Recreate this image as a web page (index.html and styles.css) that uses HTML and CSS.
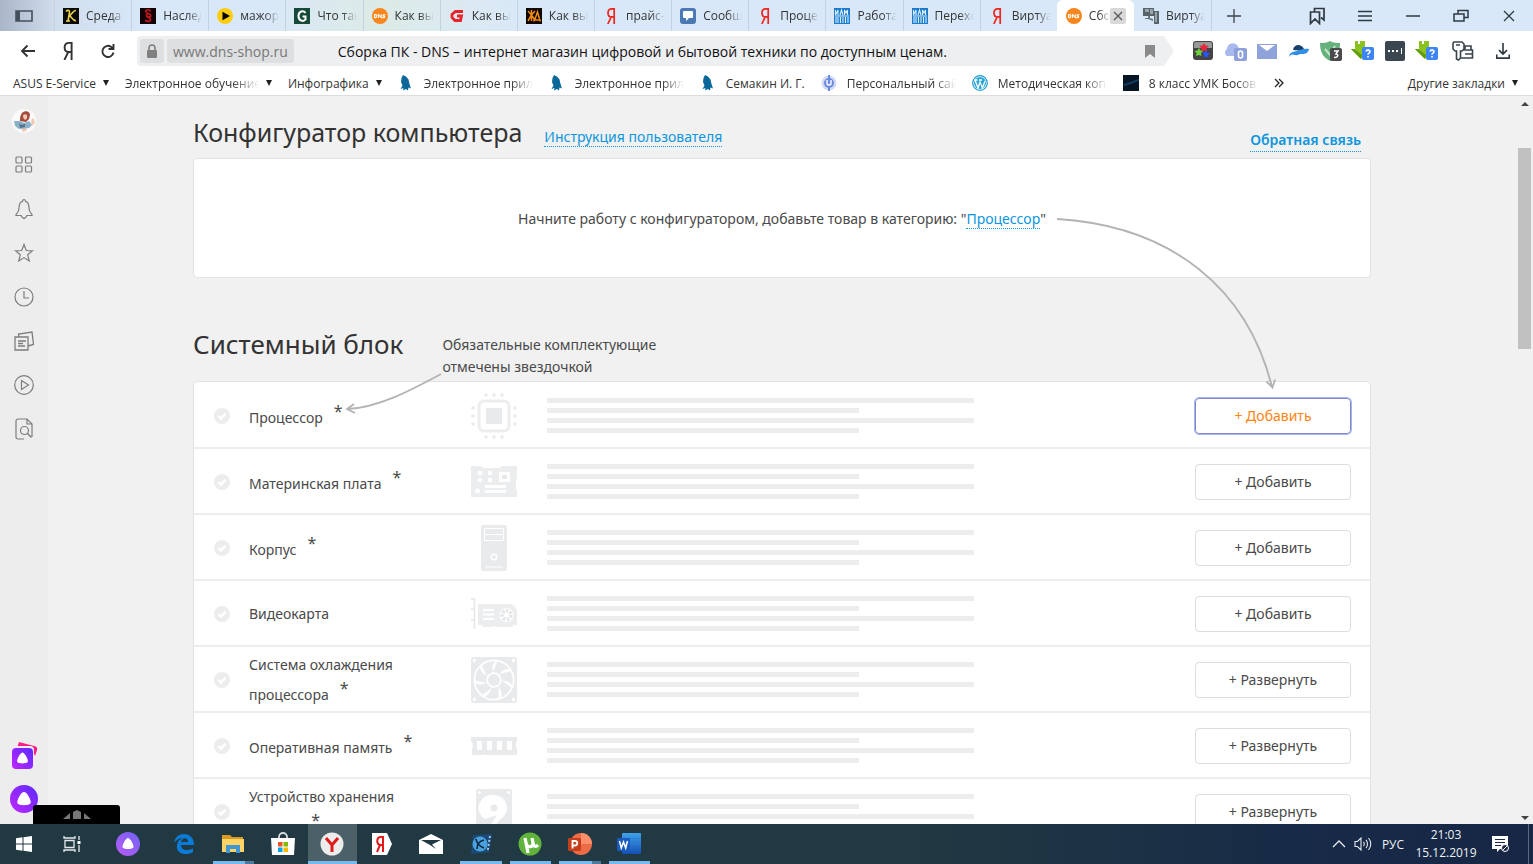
FILE: index.html
```html
<!DOCTYPE html>
<html lang="ru">
<head>
<meta charset="utf-8">
<title>Сборка ПК - DNS</title>
<link rel="stylesheet" href="styles.css">
</head>
<body>
<svg class="defs" aria-hidden="true">
  <defs>
    <linearGradient id="violet" x1="1" y1="0" x2="0" y2="1"><stop offset="0" stop-color="#5a2bff"/><stop offset="1" stop-color="#c026ff"/></linearGradient>
    <linearGradient id="soft" x1="1" y1="0" x2="0" y2="1"><stop offset="0" stop-color="#6f62f5"/><stop offset="1" stop-color="#b95cf5"/></linearGradient>
    <linearGradient id="wp" x1="0" y1="0" x2="0" y2="1"><stop offset="0" stop-color="#3fa2ea"/><stop offset="1" stop-color="#1450b4"/></linearGradient>
    <symbol id="ya" viewBox="0 0 16 16"><path d="M11.200 0V16M11.200 .8H9C6.200 .8 5 2.600 5 4.900 5 7.400 6.400 8.900 8.600 8.900H11M8.200 8.900 4.800 16" fill="none" stroke="currentColor" stroke-width="1.700"/></symbol>
    <symbol id="dns" viewBox="0 0 16 16"><circle cx="8" cy="8" r="8" fill="#f7861c"/><path d="M2.600 6.600v3h1c1.400 0 1.600-3 0-3zM6.400 10V6.700L9.200 9.500V6.300M13.500 6.700h-1.700c-1.200 0-1 1.400 0 1.400s1.400 1.500 0 1.500h-1.600" fill="none" stroke="#fff" stroke-width="1.100"/></symbol>
    <symbol id="iai" viewBox="0 0 16 16"><path fill="#1a7acb" d="M0 0h16v16H0z"/><path d="M1.500 2v5L4 2v5M6 7l1.500-5L9 7M10.500 7V2l1.500 3 1.500-3v5M2 9v6M4 9v6M6.500 9v6M9 9v6M11.500 9v6M14 9v6M1 8h14" fill="none" stroke="#d9efff" stroke-width="1.100"/></symbol>
    <symbol id="bird" viewBox="0 0 16 16"><path fill="#0b6799" d="M5 0l3 1.500 2.500 3 1 4.500 1.500 4.500-2.500-1-.5 3-2-1.500-3 1.500.5-2.500-3 1 2-3.500-1.500-3.500.500-4z"/></symbol>
    <symbol id="check" viewBox="0 0 16 16"><circle cx="8" cy="8" r="8" fill="#ededed"/><path d="M4.500 8.200 7 10.500 11.500 5.800" fill="none" stroke="#fff" stroke-width="2.400"/></symbol>
    <symbol id="savefrom" viewBox="0 0 24 20"><path fill="#8cc21f" d="M4 0h3v3h2V0h5v7h5L10 18 0 8h4z"/><path fill="#5f9c12" d="M10 18 0 8h3l8 6z"/><rect x="11" y="6" width="12" height="13" rx="2" fill="#3d85f4"/><path d="M15 10.500c.3-2 4.200-1.800 4 .3-.1 1.200-2 1.200-2 3M17 15v1.600" fill="none" stroke="#fff" stroke-width="1.600"/></symbol>
  </defs>
</svg>

<header class="browser">
  <div class="tabbar">
    <button class="panel-btn" aria-label="Панель"><svg class="i18" viewBox="0 0 18 12"><path d="M1 1h16v10H1z" fill="none" stroke="#44505c" stroke-width="1.600"/><path d="M1 1h4v10H1z" fill="#44505c"/></svg></button>
    <nav class="tabs" aria-label="Вкладки">
      <button class="tab"><svg class="i16" viewBox="0 0 16 16"><path fill="#0a0a06" d="M0 0h16v16H0z"/><path d="M3 3.500c2-2 4-1 3.500 1L5 13M3 13h4M13 2.500C10 2 9 7 5.500 8 9 7 9 13.500 13 12.500" fill="none" stroke="#ecd34b" stroke-width="1.600"/></svg><span>Среда</span></button>
      <button class="tab"><svg class="i16" viewBox="0 0 16 16"><path fill="#120406" d="M0 0h16v16H0z"/><path d="M11 3C6 0 4 4 8 5.500s4 4-1 3M10.500 6C6 5 5 8 8.500 9.500S11 15 5 12.500" fill="none" stroke="#c4161c" stroke-width="1.600"/></svg><span>Наслед</span></button>
      <button class="tab"><svg class="i16" viewBox="0 0 16 16"><circle cx="8" cy="8" r="8" fill="#ffcc10"/><path d="M5.500 3.800 13 8l-7.500 4.200z"/></svg><span>мажор</span></button>
      <button class="tab"><svg class="i16" viewBox="0 0 16 16"><path fill="#154a38" d="M0 0h16v16H0z"/><path d="M11.500 5C9.500 2 4.500 3 4.500 8s5 6 7 3.500V8.500H8.500" fill="none" stroke="#fff" stroke-width="2"/></svg><span>Что так</span></button>
      <button class="tab"><svg class="i16"><use href="#dns"/></svg><span>Как выб</span></button>
      <button class="tab"><svg class="i16" viewBox="0 0 16 16"><path d="M14 3.500H6.500L3 6.500v3l3 3h5.500l1-4.500H8" fill="none" stroke="#e8232a" stroke-width="2.800"/></svg><span>Как выб</span></button>
      <button class="tab"><svg class="i16" viewBox="0 0 16 16"><path fill="#0a0500" d="M0 0h16v16H0z"/><path d="M2 3l3.500 4L2 13M9 3 5.500 7 9 12M5.500 2v11M8 13.500V12h6v1.500M9 11l2.500-7L13.500 11" fill="none" stroke="#f08a12" stroke-width="1.500"/></svg><span>Как выб</span></button>
      <button class="tab"><svg class="i16 red"><use href="#ya"/></svg><span>прайс-л</span></button>
      <button class="tab"><svg class="i16" viewBox="0 0 16 16"><rect width="16" height="16" rx="3" fill="#4c78b4"/><path fill="#fff" d="M4 3h8a1 1 0 0 1 1 1v5a1 1 0 0 1-1 1H9l-3 3v-3H4a1 1 0 0 1-1-1V4a1 1 0 0 1 1-1z"/></svg><span>Сообщ</span></button>
      <button class="tab"><svg class="i16 red"><use href="#ya"/></svg><span>Процес</span></button>
      <button class="tab"><svg class="i16"><use href="#iai"/></svg><span>Работа</span></button>
      <button class="tab"><svg class="i16"><use href="#iai"/></svg><span>Перехо</span></button>
      <button class="tab"><svg class="i16 red"><use href="#ya"/></svg><span>Виртуа</span></button>
      <button class="tab tab-active"><svg class="i16"><use href="#dns"/></svg><span>Сбор</span><i class="tab-close"><svg class="i10" viewBox="0 0 10 10"><path d="M1 1l8 8M9 1 1 9" stroke="#555" stroke-width="1.200"/></svg></i></button>
      <button class="tab"><svg class="i16" viewBox="0 0 16 16"><path fill="#58646b" d="M0 0h11v8H0zM11 3h5v13h-5z"/><path fill="#9aa5aa" d="M2 1h4v3H2zM7 1h3v5H7zM12 4h2v10h-2z"/><path fill="#6d787e" d="M5 8h2v2l3 1v2L5 11H2v-1h3z"/></svg><span>Виртуа</span></button>
    </nav>
    <button class="new-tab" aria-label="Новая вкладка"><svg class="i16" viewBox="0 0 16 16"><path d="M8 1v14M1 8h14" stroke="#3a434b" stroke-width="1.300"/></svg></button>
    <div class="window-btns">
      <button aria-label="Закладки"><svg class="i18" viewBox="0 0 18 18"><path d="M6.500 4.500V1.500H16V13l-3-2.500M2.500 5h9v11.500L7 12l-4.500 4.500z" fill="none" stroke="#2e3940" stroke-width="1.700"/></svg></button>
      <button aria-label="Меню"><svg class="i16" viewBox="0 0 16 16"><path d="M1 3.500h14M1 8h14M1 12.500h14" stroke="#2e3940" stroke-width="1.500"/></svg></button>
      <button aria-label="Свернуть"><svg class="i16" viewBox="0 0 16 16"><path d="M1 8h14" stroke="#2e3940" stroke-width="1.500"/></svg></button>
      <button aria-label="Восстановить"><svg class="i16" viewBox="0 0 16 16"><path d="M1 6h10v7H1zM5 6V2.500h10v7h-4" fill="none" stroke="#2e3940" stroke-width="1.500"/></svg></button>
      <button aria-label="Закрыть"><svg class="i12" viewBox="0 0 12 12"><path d="M1 1l10 10M11 1 1 11" stroke="#2e3940" stroke-width="1.300"/></svg></button>
    </div>
  </div>

  <div class="toolbar">
    <div class="nav-btns">
      <button aria-label="Назад"><svg class="i16" viewBox="0 0 16 16"><path d="M15 8H2M7.500 2.500 2 8l5.500 5.500" fill="none" stroke="#333" stroke-width="1.900"/></svg></button>
      <button aria-label="Яндекс"><svg class="i18"><use href="#ya"/></svg></button>
      <button aria-label="Обновить"><svg class="i16" viewBox="0 0 16 16"><path d="M13.500 9.500A5.600 5.600 0 1 1 11 3.700L13 5.500M13.500 1v5h-5" fill="none" stroke="#333" stroke-width="1.900"/></svg></button>
    </div>
    <div class="omnibox">
      <button class="lock" aria-label="Защита"><svg class="i16" viewBox="0 0 16 16"><rect x="3" y="7" width="10" height="8" rx="1" fill="#808080"/><path d="M5 7V5a3 3 0 0 1 6 0v2" fill="none" stroke="#808080" stroke-width="1.600"/></svg></button>
      <button class="host">www.dns-shop.ru</button>
      <input class="page-title" type="text" aria-label="Адресная строка" value="Сборка ПК - DNS – интернет магазин цифровой и бытовой техники по доступным ценам.">
      <button class="mark" aria-label="В закладки"><svg class="i14" viewBox="0 0 14 14"><path fill="#8a8a8a" d="M2 1h10v13L7 10l-5 4z"/></svg></button>
    </div>
    <div class="extensions">
      <button aria-label="Звёзды"><svg class="i20" viewBox="0 0 20 20"><rect width="20" height="19" rx="3" fill="#444"/><path d="M1 3a2 2 0 0 1 2-2h14a2 2 0 0 1 2 2v4H1z" fill="#999"/><path fill="#e8283c" d="M11 2l1.500 2.500 3 .5-2 2.500.5 3-3-1-3 1 .5-3-2-2.500 3-.500z"/><path fill="#6bd13c" d="M6 7l1.500 2.500 2.500.5-2 2 .5 3-2.500-1-3 1 .5-3-2-2 3-.500z"/><path fill="#2c55ff" d="M13 9l1 2.500 3 .5-2 2 .5 2.500-2.500-1-2.500 1 .5-3-2-2 3-.500z"/></svg></button>
      <button aria-label="Облако"><svg class="i24" viewBox="0 0 24 20"><path fill="#a9b9ee" d="M4 15a4 4 0 0 1 0-7 6 6 0 0 1 11-3l3 10z"/><rect x="11" y="7" width="13" height="13" rx="2" fill="#8da0db"/><rect x="15.500" y="10" width="4" height="7" rx="2" fill="none" stroke="#fff" stroke-width="1.600"/></svg></button>
      <button aria-label="Почта"><svg class="i20" viewBox="0 0 20 16"><path fill="#8fa3da" d="M0 1h20v15H0z"/><path fill="#fff" d="M2 2h16l-8 6z"/></svg></button>
      <button aria-label="Птица"><svg class="i20" viewBox="0 0 20 16"><path fill="#193f6b" d="M4 7c1-6 8-7 11-1v2z"/><path fill="#2f8fe6" d="M0 14C1 8 5 9 8 8c4-1 6-3 12-2-1 5-5 5-8 5s-3 2-6 1-4-1-6 2z"/></svg></button>
      <button aria-label="Защита от рекламы"><svg class="i24" viewBox="0 0 24 20"><path fill="#66b17c" d="M1 2c4 0 6 0 10-2 4 2 6 2 10 2 0 8-2 14-10 18C3 16 1 9 1 2z"/><path d="M6 8l5 6 5-9" fill="none" stroke="#c4e4cd" stroke-width="2"/><rect x="11" y="7" width="12" height="13" rx="2" fill="#4a4a4c"/><path d="M15 10h4l-2 3c3 0 2 4-2 3.500" fill="none" stroke="#fff" stroke-width="1.500"/></svg></button>
      <button aria-label="Загрузчик"><svg class="i24"><use href="#savefrom"/></svg></button>
      <button aria-label="Пароли"><svg class="i20" viewBox="0 0 20 20"><rect width="20" height="20" rx="2" fill="#3a4650"/><path d="M3 10h2M7 10h2M11 10h2" stroke="#fff" stroke-width="2.200"/><path d="M16.500 7v6" stroke="#fff"/></svg></button>
      <button aria-label="Загрузчик 2"><svg class="i24"><use href="#savefrom"/></svg></button>
      <button aria-label="Ключи"><svg class="i22" viewBox="0 0 22 20"><path d="M2 1h8l2 2v5l-2 2H8.500v7L6.500 19l-2-1v-8H3L1 8V2zM13 8V5h6v4M11 9h9.500v8H9M13 13h7M4 4h4" fill="none" stroke="#38444c" stroke-width="1.600"/></svg></button>
      <button aria-label="Загрузки"><svg class="i16" viewBox="0 0 16 18"><path d="M8 0v12M3.500 8 8 12.500 12.500 8M1 13v4h14v-4" fill="none" stroke="#2e3940" stroke-width="1.800"/></svg></button>
    </div>
  </div>

  <nav class="bookmarks" aria-label="Закладки">
    <a class="folder" href="#"><span>ASUS E-Service</span><i class="caret"></i></a>
    <a class="folder" href="#"><span class="fade folder-text">Электронное обучение</span><i class="caret"></i></a>
    <a class="folder" href="#"><span>Инфографика</span><i class="caret"></i></a>
    <a class="bookmark" href="#"><svg class="i16"><use href="#bird"/></svg><span class="fade">Электронное приложение</span></a>
    <a class="bookmark" href="#"><svg class="i16"><use href="#bird"/></svg><span class="fade">Электронное приложение</span></a>
    <a class="bookmark" href="#"><svg class="i16"><use href="#bird"/></svg><span>Семакин И. Г.</span></a>
    <a class="bookmark" href="#"><svg class="i16" viewBox="0 0 16 16"><circle cx="8" cy="8" r="7.500" fill="#d3dbf2"/><circle cx="8" cy="8" r="5" fill="#6c8be0"/><path d="M8 0v16" stroke="#6c8be0" stroke-width="2"/><path d="M6 5v3.500c0 2 4 2 4 0V5" fill="none" stroke="#fff" stroke-width="1.400"/></svg><span class="fade">Персональный сайт</span></a>
    <a class="bookmark" href="#"><svg class="i16" viewBox="0 0 16 16"><circle cx="8" cy="8" r="7.300" fill="#fff" stroke="#1b9bd0" stroke-width="1.200"/><circle cx="8" cy="8" r="6" fill="#2aa5d8"/><path d="M3 5l3 8 2-6 2.500 6 2.500-7M2.500 5h3M7 5h3" fill="none" stroke="#fff" stroke-width="1.300"/></svg><span class="fade">Методическая копилка</span></a>
    <a class="bookmark" href="#"><svg class="i16" viewBox="0 0 16 16"><path fill="#071426" d="M0 0h16v16H0z"/><path d="M1 10C7 9 11 6 16 5" stroke="#123a60" stroke-width="2" fill="none"/></svg><span class="fade">8 класс УМК Босова</span></a>
    <button class="more" aria-label="Ещё"><svg class="i10" viewBox="0 0 10 10"><path d="M1 1l4 4-4 4M5 1l4 4-4 4" fill="none" stroke="#222" stroke-width="1.300"/></svg></button>
    <a class="folder other" href="#"><span>Другие закладки</span><i class="caret"></i></a>
  </nav>
</header>

<div class="viewport">
  <aside class="sidebar">
    <button aria-label="Профиль"><svg class="i24" viewBox="0 0 24 24"><circle cx="12" cy="12" r="12" fill="#fafafa"/><path fill="#a44b3c" d="M10 4c3-3 8-2 8 2l-1 4-3 3-6-1c0-3 0-5 2-8z"/><path fill="#f2c9b4" d="M11 6c3-2 5 0 4 3s-4 2-4-3zM19 13l1-4 2 1 1 4-3 3zM9 19l7-2-2 5-3 1z"/><path fill="#8bb2ca" d="M2 12l6 0 4 2 5-2 3 4-3 3-10 1-4-3z"/><path fill="#55748b" d="M7 14l2 2 4-1v3l-5 1z"/></svg></button>
    <button aria-label="Табло"><svg class="i20" viewBox="0 0 20 20"><g fill="none" stroke="#7d7d7d" stroke-width="1.200"><rect x="2" y="2" width="6" height="6" rx="1"/><rect x="11.500" y="2" width="6" height="6" rx="1"/><rect x="2" y="11" width="6" height="6" rx="1"/><rect x="11.500" y="11" width="6" height="6" rx="1"/></g></svg></button>
    <button aria-label="Уведомления"><svg class="i22" viewBox="0 0 22 22"><path d="M11 1.500c1 0 1.300 1 1.300 1.600C15.500 4 16 7 16 10c0 4 1 4.500 3 6.500v1H14c-.5 1.500-1.500 2-3 3-1.500-1-2.500-1.500-3-3H3v-1c2-2 3-2.500 3-6.500 0-3 .5-6 3.700-6.900 0-.6.300-1.600 1.300-1.600z" fill="none" stroke="#7d7d7d" stroke-width="1.200"/></svg></button>
    <button aria-label="Избранное"><svg class="i20" viewBox="0 0 20 20"><path d="M10 1.500l2.300 6 6.200.3-4.800 4 1.600 6.200L10 14.600 4.700 18l1.600-6.200-4.800-4 6.200-.3z" fill="none" stroke="#7d7d7d" stroke-width="1.200"/></svg></button>
    <button aria-label="История"><svg class="i20" viewBox="0 0 20 20"><circle cx="10" cy="10" r="9" fill="none" stroke="#7d7d7d" stroke-width="1.200"/><path d="M10 4v7h5" fill="none" stroke="#7d7d7d" stroke-width="1.200"/></svg></button>
    <button aria-label="Коллекции"><svg class="i20" viewBox="0 0 20 20"><path d="M1 6h13v13H1zM5 6l-.5-3L18 1l1.500 12.500L14 15M4 10h8M4 12.500h5M4 15h7" fill="none" stroke="#7d7d7d" stroke-width="1.300"/></svg></button>
    <button aria-label="Видео"><svg class="i20" viewBox="0 0 20 20"><circle cx="10" cy="10" r="9.300" fill="none" stroke="#7d7d7d" stroke-width="1.200"/><path d="M7.500 5.500l7 4.500-7 4.500z" fill="none" stroke="#7d7d7d" stroke-width="1.200"/></svg></button>
    <button aria-label="Поиск"><svg class="i22" viewBox="0 0 22 22"><path d="M11 21H5a2 2 0 0 1-2-2V3a2 2 0 0 1 2-2h9l5 5v13M14 1v5h5" fill="none" stroke="#7d7d7d" stroke-width="1.200"/><circle cx="11.500" cy="12.500" r="4" fill="none" stroke="#7d7d7d" stroke-width="1.200"/><path d="M14.500 15.500l4 4" stroke="#7d7d7d" stroke-width="1.500"/></svg></button>
    <button class="alice-cards" aria-label="Коллекции Алисы"><svg class="i28" viewBox="0 0 28 28"><path d="M9 1l15 4a3 3 0 0 1 3 4l-2 6-4-8H7z" fill="#ff1e86"/><rect x="1" y="5" width="23" height="23" rx="4" fill="#f4e9ff"/><rect x="2" y="7" width="21" height="21" rx="4" fill="url(#violet)"/><path fill="#fff" d="M12.500 11.500c2 0 6 7 5.300 9.300-.8 2.200-9.800 2.200-10.600 0-.7-2.300 3.300-9.300 5.300-9.300z"/></svg></button>
    <button aria-label="Алиса"><svg class="i28" viewBox="0 0 28 28"><circle cx="14" cy="14" r="14" fill="url(#violet)"/><path fill="#fff" d="M14 7c3 0 7.500 8.500 6.700 11-1 3-12.400 3-13.400 0C6.500 15.500 11 7 14 7z"/></svg></button>
  </aside>

  <main class="page">
    <div class="container">
      <div class="page-head">
        <h1>Конфигуратор компьютера</h1>
        <a class="dotted" href="#">Инструкция пользователя</a>
        <a class="dotted feedback" href="#">Обратная связь</a>
      </div>
      <section class="card intro">
        <p>Начните работу с конфигуратором, добавьте товар в категорию: "<a class="dotted" href="#">Процессор</a>"</p>
        <svg class="arrow-long" viewBox="0 0 226 176" aria-hidden="true"><path d="M4 4C120 11 195 75 219 172M213.500 166.500l6 6 2.500-8" fill="none" stroke="#b3b3b3" stroke-width="1.800"/></svg>
      </section>
      <div class="section-head">
        <h2>Системный блок</h2>
        <p class="hint">Обязательные комплектующие<br>отмечены звездочкой
          <svg class="arrow-short" viewBox="0 0 100 42" aria-hidden="true"><path d="M99 2C69 18 36 36 5 37M12 32l-7 5 8 4" fill="none" stroke="#b3b3b3" stroke-width="1.800"/></svg>
        </p>
      </div>
      <section class="card parts">
        <div class="row"><svg class="i16"><use href="#check"/></svg><div class="name name-required">Процессор<sup>*</sup></div>
          <svg class="pic" viewBox="0 0 46 46"><rect x="8" y="8" width="30" height="30" rx="5" fill="none" stroke="#ebedef" stroke-width="3"/><path fill="#e8eaec" d="M15 15h16v16H15z"/><path d="M13.500 2h19M13.500 44h19M2 13.500v19M44 13.500v19" stroke="#e8eaec" stroke-width="3" stroke-dasharray="3 5" fill="none"/></svg>
          <div class="lines"><i></i><i></i><i></i><i></i></div><button class="add add-focus">+ Добавить</button></div>
        <div class="row"><svg class="i16"><use href="#check"/></svg><div class="name name-required">Материнская плата<sup>*</sup></div>
          <svg class="pic" viewBox="0 0 46 46"><path fill="#ebedef" d="M0 7h10l2 2h17l2-2h15v12l-1 2v9l1 2v6H0z"/><g fill="#fff"><path d="M7 12h4v4H7zM7 19h4v4H7zM17 12h4v4h-4zM17 19h4v4h-4zM28 13h11v10H28zM14 26h21v3H14zM14 31h21v3H14z"/><circle cx="6.500" cy="32" r="2.500"/></g><path fill="#e6e8ea" d="M31 16h5v4h-5z"/></svg>
          <div class="lines"><i></i><i></i><i></i><i></i></div><button class="add">+ Добавить</button></div>
        <div class="row"><svg class="i16"><use href="#check"/></svg><div class="name name-required">Корпус<sup>*</sup></div>
          <svg class="pic" viewBox="0 0 46 46"><rect x="10" y="0" width="26" height="46" rx="2" fill="#e8eaec"/><path fill="none" stroke="#fff" d="M13.500 3.500h19v12h-19zM14 9.500h18M14 42h18"/><circle cx="23" cy="32" r="2.700" fill="none" stroke="#fff" stroke-width="1.500"/></svg>
          <div class="lines"><i></i><i></i><i></i><i></i></div><button class="add">+ Добавить</button></div>
        <div class="row"><svg class="i16"><use href="#check"/></svg><div class="name">Видеокарта</div>
          <svg class="pic" viewBox="0 0 46 46"><path d="M0 8h3.500v30M0 18h3M0 29h3" stroke="#e6e8ea" stroke-width="1.600" fill="none"/><path fill="#ebedef" d="M7 13h31c4 0 8 4 8 8v13h-4v2H25l-2-1-2 1H11v-2H7z"/><path d="M12 19h11M12 23.500h11M12 28h11" stroke="#fff" stroke-width="1.800"/><circle cx="35.500" cy="24" r="7" fill="#fff"/><circle cx="35.500" cy="24" r="4.300" fill="none" stroke="#e3e5e7" stroke-width="3.500" stroke-dasharray="2.500 1.300"/></svg>
          <div class="lines"><i></i><i></i><i></i><i></i></div><button class="add">+ Добавить</button></div>
        <div class="row"><svg class="i16"><use href="#check"/></svg><div class="name">Система охлаждения<br>процессора<sup>*</sup></div>
          <svg class="pic" viewBox="0 0 46 46"><rect width="46" height="46" rx="3" fill="#e8eaec"/><g fill="#fff"><circle cx="3.500" cy="3.500" r="1.700"/><circle cx="42.500" cy="3.500" r="1.700"/><circle cx="3.500" cy="42.500" r="1.700"/><circle cx="42.500" cy="42.500" r="1.700"/><circle cx="23" cy="23" r="20.500"/></g><g fill="#e8eaec"><path id="blade" d="M16 19 11 9c4-4 9-5 13-5-3 4-3 8-2 11z"/><use href="#blade" transform="rotate(51 23 23)"/><use href="#blade" transform="rotate(103 23 23)"/><use href="#blade" transform="rotate(154 23 23)"/><use href="#blade" transform="rotate(206 23 23)"/><use href="#blade" transform="rotate(257 23 23)"/><use href="#blade" transform="rotate(309 23 23)"/></g><circle cx="23" cy="23" r="7.500" fill="#fff"/><circle cx="23" cy="23" r="6" fill="#e8eaec"/></svg>
          <div class="lines"><i></i><i></i><i></i><i></i></div><button class="add">+ Развернуть</button></div>
        <div class="row"><svg class="i16"><use href="#check"/></svg><div class="name name-required">Оперативная память<sup>*</sup></div>
          <svg class="pic" viewBox="0 0 46 46"><path fill="#e8eaec" d="M0 14h46v4l-1 1v5l1 2v6H15l-1-1-2 1H1v-6l1-2-1-5-1-1z"/><path fill="#fff" d="M6 18h5v9H6zM16 18h5v9h-5zM26 18h5v9h-5zM36 18h5v9h-5z"/></svg>
          <div class="lines"><i></i><i></i><i></i><i></i></div><button class="add">+ Развернуть</button></div>
        <div class="row"><svg class="i16"><use href="#check"/></svg><div class="name">Устройство хранения<br>данных<sup>*</sup></div>
          <svg class="pic" viewBox="0 0 46 46"><rect x="5" width="36" height="46" rx="2" fill="#e8eaec"/><g fill="#fff"><circle cx="8.500" cy="3.500" r="1.500"/><circle cx="37.500" cy="3.500" r="1.500"/><path d="M23 6a13 13 0 0 1 6 24.500L20 41l-3-1 9-14-12 4A13 13 0 0 1 23 6z"/></g><circle cx="23" cy="19" r="3.500" fill="#e8eaec"/></svg>
          <div class="lines"><i></i><i></i><i></i><i></i></div><button class="add">+ Развернуть</button></div>
      </section>
    </div>
  </main>
  <div class="scrollbar" aria-hidden="true"><i class="up"></i><i class="thumb"></i><i class="down"></i></div>
  <div class="black-tab"><svg class="i28" viewBox="0 0 28 10"><path fill="#777" d="M0 9l7-6v6zM28 9l-7-6v6z"/><path fill="#777" d="M10 9V2l4-2 4 2v7z"/></svg></div>
</div>

<footer class="taskbar">
  <button class="sys" aria-label="Пуск"><svg class="i16" viewBox="0 0 16 16"><path fill="#fff" d="M0 2.200 6.500 1.300V7.500H0zM7.500 1.200 16 0v7.500H7.500zM0 8.500h6.500v6.200L0 13.800zM7.500 8.500H16V16l-8.500-1.200z"/></svg></button>
  <button class="sys" aria-label="Представление задач"><svg class="i18" viewBox="0 0 18 16"><path d="M2 4.500h9v7H2zM1 0v2h11V0M1 16v-2h11v2M16 0v4M16 9v7" fill="none" stroke="#e6eaec" stroke-width="1.300"/><path fill="#fff" d="M14.500 5h3v3h-3z"/></svg></button>
  <button class="sys alice" aria-label="Алиса"><svg class="i24" viewBox="0 0 24 24"><circle cx="12" cy="12" r="12" fill="url(#soft)"/><path fill="#fff" d="M12 6c2 0 6 7 5.500 9-.7 2.700-10.300 2.700-11 0C6 13 10 6 12 6z"/></svg></button>
  <div class="apps">
    <button aria-label="Edge"><svg class="i20" viewBox="0 0 20 20"><path fill="#0b7bd8" d="M0 9C1 3 5 0 10 0c6 0 10 4 10 11H7c0 3 2 5 6 5 2 0 4-.5 6-1.500V18c-2 1.500-5 2-8 2-7 0-10-6-7-12 1-2 3-3.500 5-4C5 4 2 6 0 9zm7-1h7c0-5-6-5-7 0z"/></svg></button>
    <button class="running stacked" aria-label="Проводник"><svg class="i22" viewBox="0 0 22 20"><path fill="#d99a22" d="M0 1h8l2 2h11v4H0z"/><path fill="#fcd364" d="M0 5h22v13H0z"/><path fill="#3e97d4" d="M4 11h14v8h-4v-4H8v4H4z"/></svg></button>
    <button aria-label="Магазин"><svg class="i24" viewBox="0 0 24 24"><path d="M8 7V5a4 4 0 0 1 8 0v2" fill="none" stroke="#d5dbde" stroke-width="1.800"/><path fill="#fff" d="M0 6h24l-1 17H1z"/><path fill="#f25022" d="M7 10h4.500v4.500H7z"/><path fill="#7fba00" d="M12.500 10H17v4.500h-4.500z"/><path fill="#00a4ef" d="M7 15.500h4.500V20H7z"/><path fill="#ffb900" d="M12.500 15.500H17V20h-4.500z"/></svg></button>
    <button class="running current" aria-label="Яндекс Браузер"><svg class="i24" viewBox="0 0 24 24"><circle cx="12" cy="12" r="11.500" fill="#ececec"/><path d="M6 6l6 7 6-7M12 12v8" fill="none" stroke="#e01a1a" stroke-width="3"/></svg></button>
    <button aria-label="Яндекс"><svg class="i22" viewBox="0 0 22 22"><path fill="#fff" d="M1 0h15l5 11-5 11H1z"/><path d="M12 3v16M12 4H10C5 4 5 12 10 12h2M9 12l-3 7" fill="none" stroke="#e01a1a" stroke-width="2"/></svg></button>
    <button aria-label="Почта"><svg class="i24" viewBox="0 0 24 20"><path fill="#fff" d="M0 6l12-6 12 6v14H0z"/><path fill="#213942" d="M2 6h20l-9 4.500 4 4.500-6-4z"/></svg></button>
    <button class="running" aria-label="Видео"><svg class="i22" viewBox="0 0 22 22"><path fill="#1c4a78" d="M3 2l19-1-3 18-18 2z"/><path stroke="#9cc8ee" stroke-width="2" stroke-dasharray="2 2" d="M20 3l-2.500 16" /><circle cx="10" cy="11" r="7.500" fill="#4aa2dd"/><path d="M6 6c1 5 3 7 8 9M14 7c-4 1-7 4-7 9" stroke="#0d2740" stroke-width="1.600" fill="none"/></svg></button>
    <button class="running" aria-label="Торрент"><svg class="i24" viewBox="0 0 24 24"><circle cx="12" cy="12" r="11.500" fill="#62b33c"/><path d="M7 6l3 15M8 11c1 5 7 5 7 0l-1-5M15 11c1 4 3 4 5 2" fill="none" stroke="#fff" stroke-width="3.200"/></svg></button>
    <button class="running stacked" aria-label="PowerPoint"><svg class="i24" viewBox="0 0 24 22"><circle cx="13" cy="11" r="11" fill="#ed6c47"/><path fill="#ff8f6b" d="M13 0a11 11 0 0 1 11 11H13z"/><rect y="5" width="13" height="13" rx="1" fill="#c43e1c"/><path d="M4.500 15.500V8H7c3 0 3 4.500 0 4.500H4.500" fill="none" stroke="#fff" stroke-width="1.800"/></svg></button>
    <button class="running" aria-label="Word"><svg class="i24" viewBox="0 0 24 22"><rect x="5" width="19" height="21" rx="1" fill="url(#wp)"/><path d="M5 5.500h19M5 11h19" stroke="#2a7fd4"/><rect y="5" width="13" height="13" rx="1" fill="#185abd"/><path d="M2.500 8l1.800 7 2.200-6 2.200 6 1.800-7" fill="none" stroke="#fff" stroke-width="1.500"/></svg></button>
  </div>
  <div class="tray">
    <button aria-label="Скрытые значки"><svg class="i14" viewBox="0 0 14 14"><path d="M1 10l6-6 6 6" fill="none" stroke="#e6eaf0" stroke-width="1.300"/></svg></button>
    <button aria-label="Громкость"><svg class="i18" viewBox="0 0 18 16"><path d="M1 5.500h2.500L7 2v12L3.500 10.500H1zM9.500 6c1 1 1 3 0 4M12 4c2 2 2 6 0 8M14.500 2c3 3.500 3 8.500 0 12" fill="none" stroke="#e6eaf0" stroke-width="1.100"/></svg></button>
    <button class="lang">РУС</button>
    <button class="clock"><span>21:03</span><span>15.12.2019</span></button>
    <button class="notify" aria-label="Уведомления"><svg class="i18" viewBox="0 0 18 18"><path fill="#fff" d="M1 1h16v13h-8l-3 3v-3H1z"/><path d="M4 4.500h10M4 7.500h10M4 10.500h6" stroke="#17284a" stroke-width="1.200"/><circle cx="14" cy="13" r="3.500" fill="#17284a" stroke="#fff"/><path d="M11.800 15.200l4.400-4.400" stroke="#fff"/></svg></button>
    <i class="peek"></i>
  </div>
</footer>
</body>
</html>
```

FILE: styles.css
```css
* { box-sizing: border-box; }

body {
  margin: 0;
  height: 100vh;
  display: flex;
  flex-direction: column;
  overflow: hidden;
  font-family: "Open Sans", "Noto Sans", sans-serif;
  color: #444;
  background: #f1f1f1;
}

button, input { font: inherit; color: inherit; border: 0; background: none; padding: 0; margin: 0; }
button { display: flex; align-items: center; justify-content: center; }
a { color: inherit; text-decoration: none; }
svg { display: block; flex: none; }
h1, h2, p { margin: 0; font-weight: 400; }

.defs { position: absolute; width: 0; height: 0; }
.i10 { width: 10px; height: 10px; }
.i12 { width: 12px; height: 12px; }
.i14 { width: 14px; height: 14px; }
.i16 { width: 16px; height: 16px; }
.i18 { width: 18px; height: 18px; }
.i20 { width: 20px; height: 20px; }
.i22 { width: 22px; height: 22px; }
.i24 { width: 24px; height: 24px; }
.i28 { width: 28px; height: 28px; }
.red { color: #f0261c; }

/* Browser window */
.browser { background: #fff; flex: none; }
.tabbar { display: flex; height: 31px; background: #d9e8f9; }
.panel-btn { width: 54px; padding-right: 6px; background: linear-gradient(90deg, #a8b6c8, #cfdcec); }
.tabs { display: flex; flex: 0 1 1157px; min-width: 0; background: linear-gradient(90deg, #cfdded, #d9e8f9 8%, #d9e8f9 18%, #dcebe6 28%, #dbeaf0 34%, #d9e8f9 42%); }
.tab {
  flex: 1 1 0;
  min-width: 0;
  justify-content: flex-start;
  gap: 7px;
  padding: 0 4px 0 8px;
  border-left: 1px solid #c3d1e0;
  font-size: 12px;
  color: #333;
}
.tab span {
  overflow: hidden;
  white-space: nowrap;
  flex: 1;
  text-align: left;
  mask-image: linear-gradient(90deg, #000 60%, transparent 95%);
}
.tab-active { background: #fff; border-radius: 6px 6px 0 0; border-color: #fff; }
.tab-active span { mask-image: linear-gradient(90deg, #000 50%, transparent); }
.tab-active + .tab { border-color: transparent; }
.tab-close { display: flex; align-items: center; justify-content: center; width: 16px; height: 16px; margin: 0 4px 0 -7px; background: #d8d8d8; border-radius: 2px; }
.new-tab { width: 44px; border-left: 1px solid #c3d1e0; }
.window-btns { display: flex; margin-left: auto; }
.window-btns button { width: 48px; }

.toolbar { display: flex; align-items: center; height: 40px; }
.nav-btns { display: flex; padding-left: 8px; width: 137px; flex: none; color: #333; }
.nav-btns button { width: 40px; }
.omnibox {
  flex: 1;
  min-width: 0;
  display: flex;
  align-items: center;
  gap: 3px;
  height: 30px;
  padding: 0 14px 0 3px;
  background: #eeeff1;
  border-radius: 4px;
  clip-path: polygon(0 0, calc(100% - 10px) 0, 100% 50%, calc(100% - 10px) 100%, 0 100%);
}
.lock, .host { height: 24px; background: #dedfe0; border-radius: 3px; }
.lock { width: 24px; flex: none; }
.host { padding: 0 6px; font-size: 14px; color: #777; flex: none; }
.page-title { flex: 1; min-width: 0; margin-left: 41px; font-size: 14px; color: #111; }
.mark { width: 20px; flex: none; }
.extensions { display: flex; padding: 0 10px 0 13px; flex: none; }
.extensions button { width: 32px; }
.extensions button:nth-last-child(-n+2) { width: 40px; }

.bookmarks { display: flex; align-items: center; height: 25px; padding: 0 15px 0 13px; gap: 16px; font-size: 12px; white-space: nowrap; color: #333; border-bottom: 1px solid #ddd; }
.folder, .bookmark { display: flex; align-items: center; gap: 7px; flex: none; }
.bookmark { gap: 10px; }
.fade { width: 109px; overflow: hidden; mask-image: linear-gradient(90deg, #000 80%, transparent); }
.folder-text { width: 134px; }
.caret { border: 3px solid transparent; border-top: 6px solid #222; border-bottom: 0; }
.other { margin-left: auto; }

/* Page area */
.viewport { position: relative; flex: 1; min-height: 0; display: flex; }
.sidebar { width: 48px; flex: none; display: flex; flex-direction: column; padding: 3px 0; background: #ededed; }
.sidebar button { height: 44px; flex: none; }
.sidebar .alice-cards { margin-top: auto; }

.page { flex: 1; min-width: 0; overflow: hidden; padding: 0 16px; color: #4a4a4a; font-family: "Noto Sans", "Open Sans", sans-serif; font-size: 14px; }
.container { max-width: 1178px; margin: 0 auto; }
.page-head { display: flex; align-items: baseline; height: 62px; padding: 16px 10px 6px 0; }
h1, h2 { font-size: 25px; line-height: 40px; color: #333; white-space: nowrap; }
h2 { font-size: 26px; }
.page-head h1 { margin-right: 22px; }
.dotted { color: #0d95dd; border-bottom: 1px dotted #0d95dd; }
.feedback { margin-left: auto; align-self: flex-end; padding-bottom: 2px; font-weight: 600; }
.card { background: #fff; border: 1px solid #e2e2e2; border-radius: 4px; }
.intro { position: relative; height: 120px; display: flex; align-items: center; justify-content: center; }
.arrow-long { position: absolute; left: 859px; top: 56px; width: 226px; height: 176px; z-index: 1; }
.section-head { display: flex; height: 103px; padding-top: 46px; gap: 39px; }
.hint { position: relative; line-height: 22px; padding-top: 10px; }
.arrow-short { position: absolute; left: -100px; top: 48px; width: 100px; height: 42px; z-index: 1; }

.parts { padding-top: 1px; }
.row {
  display: grid;
  grid-template-columns: 55px 222px 76px 1fr 156px;
  align-items: center;
  height: 66px;
  padding: 1px 19px 0 0;
  border-bottom: 2px solid #eee;
}
.row > .i16 { margin-left: 20px; }
.name { line-height: 30px; white-space: nowrap; }
.name-required { padding-top: 5px; }
.name sup { margin-left: 11px; font-size: 16px; line-height: 16px; }
.pic { width: 46px; height: 46px; }
.lines { display: grid; gap: 5px; max-width: 427px; }
.lines i { height: 5px; background: #ededed; }
.lines i:nth-child(even) { width: 73%; }
.add { height: 36px; border: 1px solid #ddd; border-radius: 4px; }
.add-focus { color: #ff8410; border-color: #8a83c4; outline: 1px solid #9cbcf5; }

.scrollbar { width: 17px; flex: none; display: flex; flex-direction: column; align-items: center; padding: 6px 0 4px; background: #f1f1f1; }
.scrollbar .up { border: 4px solid transparent; border-bottom-color: #444; border-top: 0; }
.scrollbar .thumb { width: 13px; height: 201px; margin-top: 42px; background: #c1c1c1; }
.scrollbar .down { border: 4px solid transparent; border-top-color: #444; border-bottom: 0; margin-top: auto; }
.black-tab { position: absolute; left: 33px; bottom: 0; width: 87px; height: 19px; background: #000; border-radius: 3px 3px 0 0; display: flex; align-items: center; justify-content: center; }

/* Taskbar */
.taskbar { display: flex; flex: none; height: 40px; color: #eef1f5; background: linear-gradient(90deg, #213942 0%, #213942 60%, #172a47 85%, #172745 100%); }
.sys { width: 48px; }
.alice { width: 63px; }
.apps { display: flex; width: 495px; }
.apps button { position: relative; flex: 1; }
.running::after { content: ""; position: absolute; left: 4px; right: 4px; bottom: 0; height: 3px; background: #76b9ed; }
.stacked::after { background: linear-gradient(90deg, #76b9ed 78%, #4b789b 78%); }
.current { background: #4c6068; }
.current::after { left: 0; right: 0; }
.tray { display: flex; margin-left: auto; font-size: 12px; }
.tray button { width: 24px; }
.tray .lang { width: 36px; }
.tray .clock { width: 70px; flex-direction: column; line-height: 18px; }
.tray .notify { width: 38px; }
.peek { width: 5px; margin-left: 9px; border-left: 1px solid #5a6880; }
```
